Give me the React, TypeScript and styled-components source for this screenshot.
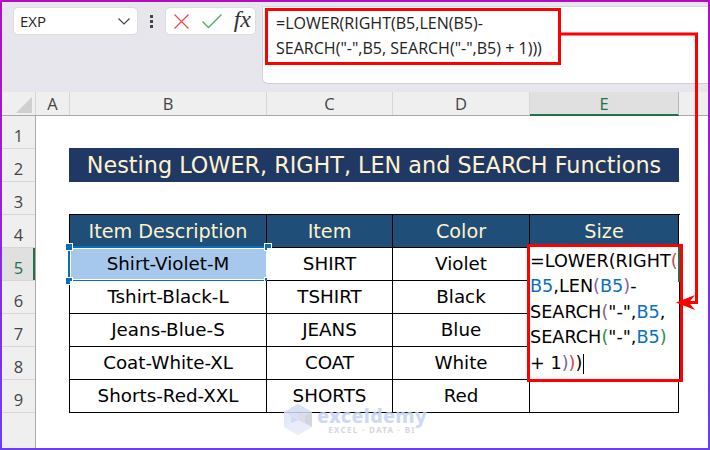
import React from 'react';
import styled, { createGlobalStyle } from 'styled-components';

const GlobalStyle = createGlobalStyle`
  html, body {
    margin: 0;
    padding: 0;
    background: #fff;
  }
`;

const cellFont = `"DejaVu Sans", "Noto Sans", sans-serif`;
const uiFont = `"Open Sans", "Noto Sans", sans-serif`;

const Frame = styled.div`
  position: relative;
  width: 710px;
  height: 450px;
  box-sizing: border-box;
  padding: 2px;
  overflow: hidden;
  background: linear-gradient(to bottom, #b40cc0, #6a3ef6);
`;
const Window = styled.div`
  position: relative;
  height: 446px;
  display: flex;
  flex-direction: column;
  background: #fff;
  overflow: hidden;
`;
const TopBar = styled.div`
  height: 90px;
  flex: none;
  box-sizing: border-box;
  padding: 5px 0 0 11px;
  display: flex;
  align-items: flex-start;
  background: #e6e6ec;
`;
const NameBox = styled.div`
  width: 125px;
  height: 28px;
  box-sizing: border-box;
  padding: 0 6px 0 6px;
  display: flex;
  align-items: center;
  justify-content: space-between;
  background: #fff;
  border: 1px solid #dcdce0;
  border-radius: 5px;
  font: 15px ${uiFont};
  color: #222;
`;
const Dots = styled.div`
  width: 27px;
  height: 28px;
  display: flex;
  flex-direction: column;
  align-items: center;
  justify-content: center;
  gap: 2px;
  flex: none;
  span {
    width: 3px;
    height: 3px;
    background: #444;
  }
`;
const IconBox = styled.div`
  width: 91px;
  height: 28px;
  box-sizing: border-box;
  padding: 0 4px 0 7px;
  display: flex;
  align-items: center;
  justify-content: space-between;
  background: #fff;
  border: 1px solid #dcdce0;
  border-radius: 5px;
  flex: none;
`;
const Fx = styled.span`
  font: italic 24px "Liberation Serif", serif;
  color: #333;
  line-height: 1;
  margin-top: -4px;
`;
const FormulaBar = styled.div`
  flex: 1;
  height: 78px;
  margin: -1px 0 0 6px;
  box-sizing: border-box;
  padding: 1px 0 0 2px;
  background: #fff;
  border-left: 1px solid #d4d4d8;
  border-bottom: 1px solid #cfcfd3;
  border-top: 1px solid #d8d8dc;
  border-radius: 0 0 0 6px;
`;
const FormulaHighlight = styled.div`
  width: 296px;
  height: 57px;
  box-sizing: border-box;
  border: 3px solid #f00;
  padding: 0 0 0 8px;
  font: 16.05px/25px ${uiFont};
  color: #222;
  white-space: nowrap;
`;
const ColumnBar = styled.div`
  height: 24px;
  flex: none;
  display: grid;
  grid-template-columns: 34px 34px 197px 126px 137px 149px 1fr;
  background: #efefef;
  border-bottom: 1px solid #a9a9a9;
  box-sizing: border-box;
`;
const Corner = styled.div`
  position: relative;
  border-right: 1px solid #d6d6d6;
  &::after {
    content: '';
    position: absolute;
    right: 3px;
    bottom: 2px;
    width: 16px;
    height: 16px;
    background: #cfcfcf;
    clip-path: polygon(100% 0, 100% 100%, 0 100%);
  }
`;
const ColumnHead = styled.div<{ $active?: boolean }>`
  display: flex;
  align-items: center;
  justify-content: center;
  font: 16.5px ${uiFont};
  color: ${(p) => (p.$active ? '#217346' : '#444')};
  background: ${(p) => (p.$active ? '#e0e0e0' : 'transparent')};
  border-right: 1px solid ${(p) => (p.$active ? '#b5b5b5' : '#d6d6d6')};
  box-shadow: ${(p) => (p.$active ? '0 1px 0 #217346, inset 0 -1px 0 #217346' : 'none')};
`;
const Body = styled.div`
  flex: 1;
  display: flex;
  min-height: 0;
`;
const RowHeads = styled.div`
  width: 34px;
  flex: none;
  background: #efefef;
  border-right: 1px solid #a9a9a9;
  box-sizing: border-box;
`;
const RowHead = styled.div<{ $active?: boolean }>`
  height: 33px;
  box-sizing: border-box;
  display: flex;
  align-items: center;
  justify-content: center;
  padding-top: 7px;
  font: 16.5px ${uiFont};
  color: ${(p) => (p.$active ? '#217346' : '#444')};
  background: ${(p) => (p.$active ? '#e0e0e0' : 'transparent')};
  border-bottom: 1px solid #d6d6d6;
  box-shadow: ${(p) => (p.$active ? 'inset -2px 0 0 #217346' : 'none')};
`;
const Sheet = styled.div`
  flex: 1;
  box-sizing: border-box;
  padding: 32px 0 0 33px;
`;
const TitleBand = styled.div`
  width: 610px;
  height: 34px;
  margin-bottom: 32px;
  display: flex;
  align-items: center;
  justify-content: center;
  background: #203864;
  color: #fff2cc;
  font: 22.3px ${cellFont};
  white-space: nowrap;
`;
const Table = styled.div`
  position: relative;
  width: 610px;
  display: grid;
  grid-template-columns: 197px 126px 137px 149px;
  grid-auto-rows: 33px;
  border-top: 1px solid #000;
  border-left: 1px solid #000;
`;
const Cell = styled.div<{ $head?: boolean; $selected?: boolean }>`
  position: relative;
  display: flex;
  align-items: center;
  justify-content: center;
  box-sizing: border-box;
  padding-bottom: ${(p) => (p.$head ? '0' : '2px')};
  border-right: 1px solid #000;
  border-bottom: 1px solid #000;
  white-space: nowrap;
  font: ${(p) => (p.$head ? '19.2px' : '18.3px')} ${cellFont};
  color: ${(p) => (p.$head ? '#fff2cc' : '#000')};
  background: ${(p) => (p.$head ? '#1f4e78' : p.$selected ? '#a6c8ec' : '#fff')};
`;
const Selection = styled.div`
  position: absolute;
  top: -2px;
  left: -2px;
  right: -3px;
  bottom: -2px;
  border: 2px solid #0a6ebd;
  box-shadow: inset 0 0 0 1px #fff;
`;
const Handle = styled.i<{ $right?: boolean; $bottom?: boolean }>`
  position: absolute;
  width: 6px;
  height: 6px;
  background: #0a6ebd;
  box-shadow: 0 0 0 1px #fff;
  ${(p) => (p.$right ? 'right: -4px;' : 'left: -4px;')}
  ${(p) => (p.$bottom ? 'bottom: -4px;' : 'top: -4px;')}
`;
const Editor = styled.div`
  position: absolute;
  top: 29px;
  left: 457px;
  width: 156px;
  height: 138px;
  box-sizing: border-box;
  border: 3px solid #f00;
  padding: 2px 0 0 0;
  background: #fff;
  font: 17.65px/25.4px ${cellFont};
  color: #000;
  white-space: nowrap;
  overflow: hidden;
  &::after {
    content: '';
    position: absolute;
    top: 0;
    bottom: 0;
    right: 0;
    width: 1px;
    background: #000;
  }
  &::before {
    content: '';
    position: absolute;
    top: 0;
    height: 35px;
    right: 0;
    width: 2px;
    background: #217346;
    z-index: 1;
  }
`;
const Ref = styled.span`
  color: #0a70c0;
`;
const Paren = styled.span<{ $c: string }>`
  color: ${(p) => p.$c};
`;
const Caret = styled.span`
  display: inline-block;
  width: 1px;
  height: 20px;
  margin-left: 1px;
  vertical-align: -5px;
  background: #000;
`;
const Connector = styled.svg`
  position: absolute;
  left: 0;
  top: 0;
  pointer-events: none;
`;
const Watermark = styled.div`
  position: absolute;
  left: 283px;
  top: 403px;
  display: flex;
  align-items: flex-start;
  gap: 4px;
  opacity: 0.85;
  pointer-events: none;
`;
const MarkText = styled.div`
  display: flex;
  flex-direction: column;
  align-items: center;
  padding-top: 3px;
`;
const MarkName = styled.div`
  font: 800 19.6px/19px "Noto Sans", sans-serif;
  color: #c6d3f7;
  letter-spacing: 0.4px;
`;
const MarkSub = styled.div`
  font: 700 8px/9px "Noto Sans", sans-serif;
  color: #cfd2d8;
  letter-spacing: 1.3px;
`;

const violet = '#8064a2';
const red = '#c0504d';
const green = '#2e8b57';

const rows = [
  ['Shirt-Violet-M', 'SHIRT', 'Violet'],
  ['Tshirt-Black-L', 'TSHIRT', 'Black'],
  ['Jeans-Blue-S', 'JEANS', 'Blue'],
  ['Coat-White-XL', 'COAT', 'White'],
  ['Shorts-Red-XXL', 'SHORTS', 'Red'],
];

export default function App() {
  return (
    <>
      <GlobalStyle />
      <Frame>
        <Window>
          <TopBar>
            <NameBox>
              EXP
              <svg width="14" height="14" viewBox="0 0 14 14" fill="none" stroke="#444" strokeWidth="1.1">
                <path d="M1.5 4.5 7 10l5.5-5.5" />
              </svg>
            </NameBox>
            <Dots>
              <span />
              <span />
              <span />
            </Dots>
            <IconBox>
              <svg width="17" height="17" viewBox="0 0 17 17" fill="none" stroke="#f0454f" strokeWidth="1.2">
                <path d="M1.5 1.5l14 14M15.5 1.5l-14 14" />
              </svg>
              <svg width="22" height="16" viewBox="0 0 22 16" fill="none" stroke="#4caf6a" strokeWidth="1.4">
                <path d="M1.5 8.5 7.5 14.5 20.5 1.5" />
              </svg>
              <Fx>fx</Fx>
            </IconBox>
            <FormulaBar>
              <FormulaHighlight>
                =LOWER(RIGHT(B5,LEN(B5)-
                <br />
                SEARCH(&quot;-&quot;,B5, SEARCH(&quot;-&quot;,B5) + 1)))
              </FormulaHighlight>
            </FormulaBar>
          </TopBar>
          <ColumnBar>
            <Corner />
            <ColumnHead>A</ColumnHead>
            <ColumnHead>B</ColumnHead>
            <ColumnHead>C</ColumnHead>
            <ColumnHead>D</ColumnHead>
            <ColumnHead $active>E</ColumnHead>
            <div />
          </ColumnBar>
          <Body>
            <RowHeads>
              {[1, 2, 3, 4, 5, 6, 7, 8, 9].map((n) => (
                <RowHead key={n} $active={n === 5}>
                  {n}
                </RowHead>
              ))}
            </RowHeads>
            <Sheet>
              <TitleBand>Nesting LOWER, RIGHT, LEN and SEARCH Functions</TitleBand>
              <Table>
                <Cell $head>Item Description</Cell>
                <Cell $head>Item</Cell>
                <Cell $head>Color</Cell>
                <Cell $head>Size</Cell>
                {rows.map((r, i) => (
                  <React.Fragment key={r[0]}>
                    <Cell $selected={i === 0}>
                      {r[0]}
                      {i === 0 && (
                        <Selection>
                          <Handle />
                          <Handle $right />
                          <Handle $bottom />
                          <Handle $right $bottom />
                        </Selection>
                      )}
                    </Cell>
                    <Cell>{r[1]}</Cell>
                    <Cell>{r[2]}</Cell>
                    <Cell />
                  </React.Fragment>
                ))}
                <Editor>
                  =LOWER(RIGHT<Paren $c={red}>(</Paren>
                  <br />
                  <Ref>B5</Ref>,LEN<Paren $c={violet}>(</Paren>
                  <Ref>B5</Ref>
                  <Paren $c={violet}>)</Paren>-
                  <br />
                  SEARCH<Paren $c={violet}>(</Paren>&quot;-&quot;,<Ref>B5</Ref>,
                  <br />
                  SEARCH<Paren $c={green}>(</Paren>&quot;-&quot;,<Ref>B5</Ref>
                  <Paren $c={green}>)</Paren>
                  <br />+ 1<Paren $c={violet}>)</Paren>
                  <Paren $c={red}>)</Paren>)
                  <Caret />
                </Editor>
              </Table>
            </Sheet>
          </Body>
        </Window>
        <Watermark>
          <svg width="30" height="32" viewBox="0 0 30 32">
            <path d="M15 1 29 9v15l-14 8-14-8V9z" fill="#dfe6f8" />
            <path d="M15 1 29 9 15 17 1 9z" fill="#d3dcf7" />
            <path d="M1 9l14 8v7L8 20V13L1 9z" fill="#c9d5f6" />
            <path d="M15 8l7 4v9l-7-4z" fill="#d5d8de" />
            <path d="M29 9v15l-7-4v-8z" fill="#c9ced6" />
            <path d="M1 24l14 8 14-8-14-7z" fill="#e6ebf8" />
          </svg>
          <MarkText>
            <MarkName>exceldemy</MarkName>
            <MarkSub>EXCEL · DATA · BI</MarkSub>
          </MarkText>
        </Watermark>
        <Connector width="710" height="450" viewBox="0 0 710 450" fill="none">
          <path d="M560 34H696.5V302.5H684" stroke="#f00" strokeWidth="3" />
          <path d="M676 302.5 695 295 689 302.5 695 310z" fill="#f00" />
        </Connector>
      </Frame>
    </>
  );
}
